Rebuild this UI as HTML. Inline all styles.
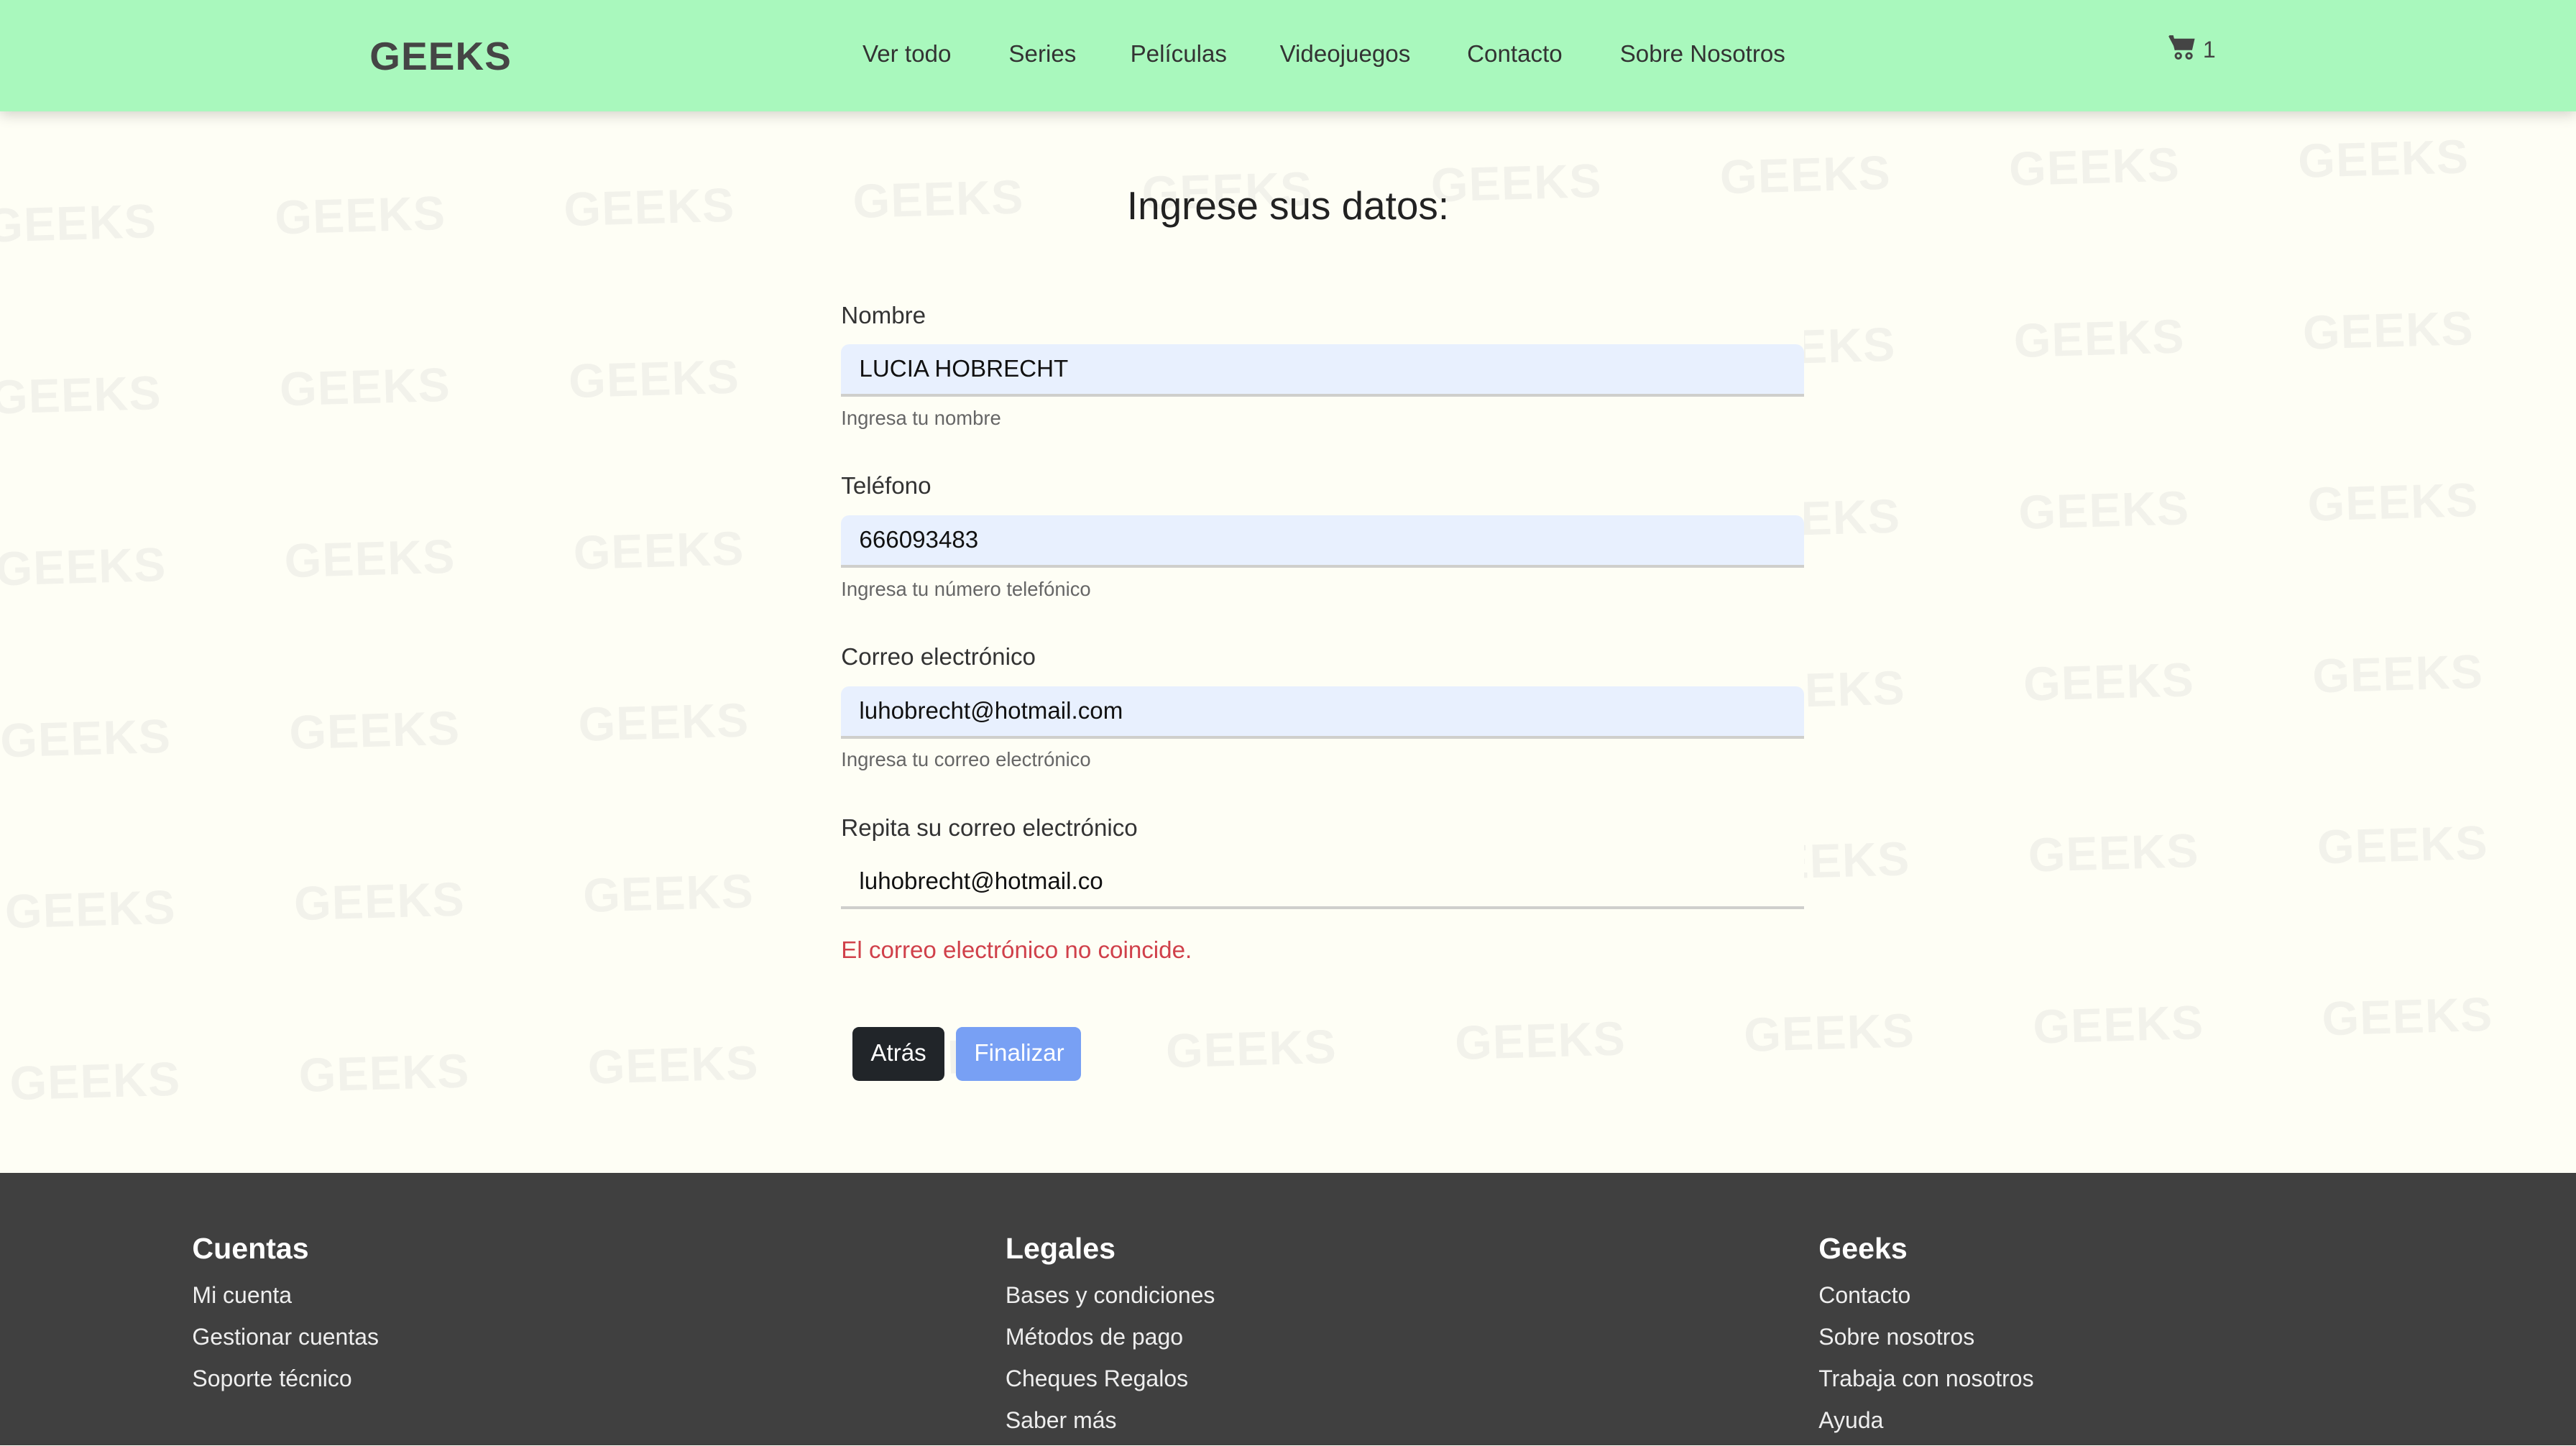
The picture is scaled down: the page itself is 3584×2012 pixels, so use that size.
<!DOCTYPE html>
<html><head><meta charset="utf-8">
<style>
*{margin:0;padding:0;box-sizing:border-box}
html,body{width:3584px;height:2012px;overflow:hidden;background:#fefef5}
#w{zoom:2.285714;width:1568px;height:880px;position:relative;overflow:hidden;font-family:"Liberation Sans",sans-serif;color:#212529;background:#fefef5}
header{position:absolute;left:0;top:0;width:1568px;height:68px;background:#a9f8bd;box-shadow:0 2px 8px rgba(0,0,0,.18);z-index:5}
.logo{position:absolute;left:225px;top:20px;font-weight:bold;font-size:24px;letter-spacing:0.5px;color:#454545}
nav a{position:absolute;top:25px;font-size:14.5px;color:#333;text-decoration:none}
.cart{position:absolute;left:1320px;top:21px;font-size:14px;color:#444}
.wm{position:absolute;left:-45px;top:122px;transform:rotate(-1.6deg);transform-origin:0 0;z-index:0}
.wm div{white-space:nowrap;height:104.5px}
.wm span{display:inline-block;width:176px;text-align:center;font-weight:bold;font-size:29px;letter-spacing:0.5px;color:#f2f2eb}
.cover{position:absolute;left:475px;top:135px;width:623px;height:470px;background:#fefef5;z-index:1}
h2{position:absolute;left:0;width:1568px;text-align:center;top:111px;font-size:24px;font-weight:500;color:#222;z-index:2}
.f{position:absolute;left:512px;width:586px;z-index:2}
.lab{font-size:14.5px;color:#333}
.in{height:32px;background:#e8f0fe;border-bottom:2px solid #cfcfcc;border-radius:5px 5px 0 0;padding:7px 11px;font-size:14.5px;color:#111}
.in.w{background:#fefef5}
.hint{font-size:12px;color:#666}
.err{font-size:14.5px;color:#d0404a}
.btn{position:absolute;top:625px;height:33px;border-radius:4px;font-size:14.5px;color:#fff;padding:8px 11px;z-index:2}
footer{position:absolute;left:0;top:714px;width:1568px;height:166px;background:#404040;color:#fff;z-index:3}
.col{position:absolute;top:36px}
.col h4{font-size:18px;font-weight:bold;margin-bottom:10px}
.col p{font-size:14px;font-weight:300;height:25.3px;color:#eee}
</style></head><body><div id="w">
<div class="wm">
<div><span>GEEKS</span><span>GEEKS</span><span>GEEKS</span><span>GEEKS</span><span>GEEKS</span><span>GEEKS</span><span>GEEKS</span><span>GEEKS</span><span>GEEKS</span><span>GEEKS</span></div>
<div><span>GEEKS</span><span>GEEKS</span><span>GEEKS</span><span>GEEKS</span><span>GEEKS</span><span>GEEKS</span><span>GEEKS</span><span>GEEKS</span><span>GEEKS</span><span>GEEKS</span></div>
<div><span>GEEKS</span><span>GEEKS</span><span>GEEKS</span><span>GEEKS</span><span>GEEKS</span><span>GEEKS</span><span>GEEKS</span><span>GEEKS</span><span>GEEKS</span><span>GEEKS</span></div>
<div><span>GEEKS</span><span>GEEKS</span><span>GEEKS</span><span>GEEKS</span><span>GEEKS</span><span>GEEKS</span><span>GEEKS</span><span>GEEKS</span><span>GEEKS</span><span>GEEKS</span></div>
<div><span>GEEKS</span><span>GEEKS</span><span>GEEKS</span><span>GEEKS</span><span>GEEKS</span><span>GEEKS</span><span>GEEKS</span><span>GEEKS</span><span>GEEKS</span><span>GEEKS</span></div>
<div><span>GEEKS</span><span>GEEKS</span><span>GEEKS</span><span>GEEKS</span><span>GEEKS</span><span>GEEKS</span><span>GEEKS</span><span>GEEKS</span><span>GEEKS</span><span>GEEKS</span></div>
</div>
<div class="cover"></div>
<header>
<div class="logo">GEEKS</div>
<nav><a style="left:525px">Ver todo</a><a style="left:614px">Series</a><a style="left:688px">Películas</a><a style="left:779px">Videojuegos</a><a style="left:893px">Contacto</a><a style="left:986px">Sobre Nosotros</a></nav>
<div class="cart"><svg width="17" height="16" viewBox="0 0 17 16" style="vertical-align:-2px"><path d="M0 1h2.5l.8 1.5H16l-1.6 7H4.5z" fill="#444"/><path d="M0.5 1.2H2.4L4.5 9.5" stroke="#444" stroke-width="1.4" fill="none"/><circle cx="6" cy="13" r="1.6" fill="none" stroke="#444" stroke-width="1.3"/><circle cx="12.5" cy="13" r="1.6" fill="none" stroke="#444" stroke-width="1.3"/></svg> 1</div>
</header>
<h2>Ingrese sus datos:</h2>
<div class="f" style="top:184px"><div class="lab">Nombre</div><div class="in" style="margin-top:9px">LUCIA HOBRECHT</div><div class="hint" style="margin-top:6px">Ingresa tu nombre</div></div>
<div class="f" style="top:288px"><div class="lab">Teléfono</div><div class="in" style="margin-top:9px">666093483</div><div class="hint" style="margin-top:6px">Ingresa tu número telefónico</div></div>
<div class="f" style="top:392px"><div class="lab">Correo electrónico</div><div class="in" style="margin-top:9px">luhobrecht@hotmail.com</div><div class="hint" style="margin-top:6px">Ingresa tu correo electrónico</div></div>
<div class="f" style="top:496px"><div class="lab">Repita su correo electrónico</div><div class="in w" style="margin-top:9px">luhobrecht@hotmail.co</div><div class="err" style="margin-top:17px">El correo electrónico no coincide.</div></div>
<div class="btn" style="left:519px;width:56px;background:#212529">Atrás</div>
<div class="btn" style="left:582px;width:76px;background:#78a0f4">Finalizar</div>
<footer>
<div class="col" style="left:117px"><h4>Cuentas</h4><p>Mi cuenta</p><p>Gestionar cuentas</p><p>Soporte técnico</p></div>
<div class="col" style="left:612px"><h4>Legales</h4><p>Bases y condiciones</p><p>Métodos de pago</p><p>Cheques Regalos</p><p>Saber más</p></div>
<div class="col" style="left:1107px"><h4>Geeks</h4><p>Contacto</p><p>Sobre nosotros</p><p>Trabaja con nosotros</p><p>Ayuda</p></div>
</footer>
</div></body></html>
